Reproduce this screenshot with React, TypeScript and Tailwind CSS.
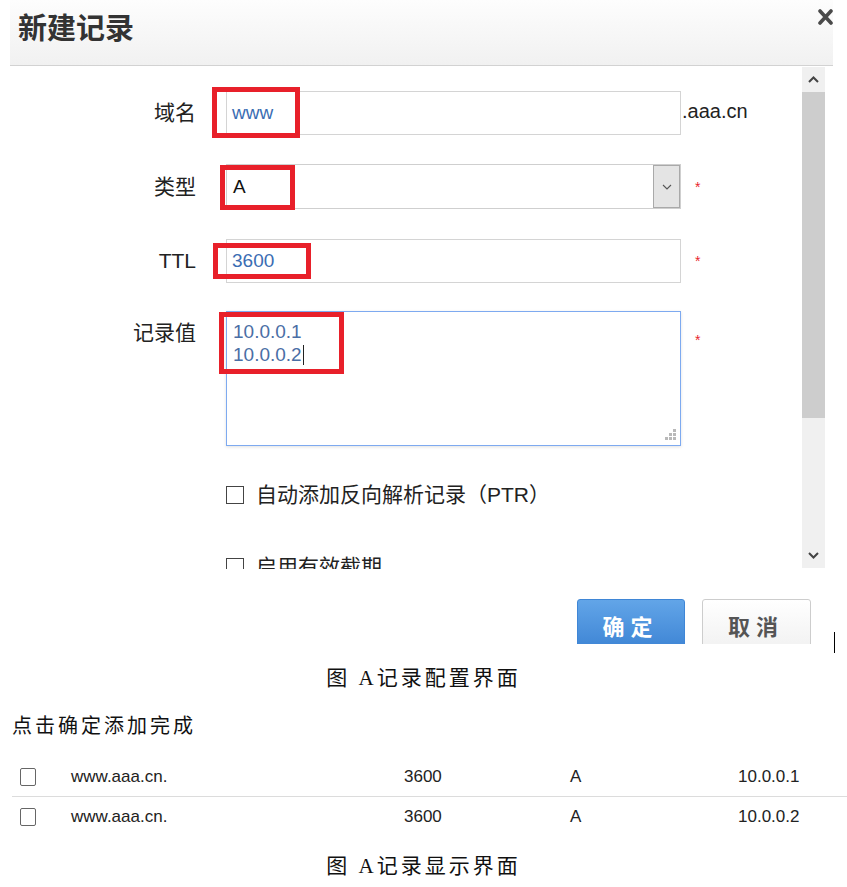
import type { ReactNode } from "react";

const sans = "font-['Liberation_Sans','Noto_Sans_CJK_SC',sans-serif]";
const serif = "font-['Liberation_Serif','Noto_Sans_CJK_SC',serif]";

function RedMark({ className }: { className: string }) {
  return <div className={`pointer-events-none absolute border-[5px] border-[#e8202a] ${className}`} />;
}

function Star({ className = "" }: { className?: string }) {
  return <span className={`-ml-[16px] text-[14px] leading-none text-[#e8262d] ${className}`}>*</span>;
}

function Row({ label, children, top, labelTop = false }: { label: string; children: ReactNode; top: string; labelTop?: boolean }) {
  return (
    <div className={`grid grid-cols-[186px_455px_1fr] gap-x-[30px] ${labelTop ? "items-start" : "items-center"} ${top}`}>
      <div className={`text-right text-[21px] leading-[28px] text-[#222] ${labelTop ? "pt-[8px]" : ""}`}>{label}</div>
      {children}
    </div>
  );
}

function Chevron({ up }: { up?: boolean }) {
  return (
    <svg width="11" height="7" viewBox="0 0 11 7" className="text-[#444]">
      <path d={up ? "M1 6 L5.5 1.5 L10 6" : "M1 1 L5.5 5.5 L10 1"} fill="none" stroke="currentColor" strokeWidth="2" />
    </svg>
  );
}

function Box({ small }: { small?: boolean }) {
  return small ? (
    <span className="inline-block h-[18px] w-[16px] rounded-[2px] border border-[#666] bg-white" />
  ) : (
    <span className="inline-block h-[18px] w-[18px] border-[1.5px] border-[#444] bg-white" />
  );
}

export default function App() {
  const records = ["10.0.0.1", "10.0.0.2"];
  return (
    <div className={`min-h-[887px] w-[847px] bg-white ${sans}`}>
      {/* dialog header */}
      <div className="ml-[10px] flex h-[66px] w-[823px] items-start justify-between border-b border-[#d2d2d2] bg-gradient-to-b from-[#fdfdfd] to-[#f1f1f1] pl-[8px]">
        <h1 className="pt-[6px] font-['Noto_Sans_CJK_SC',sans-serif] text-[29px] font-bold leading-[40px] text-[#333]">新建记录</h1>
        <svg width="15" height="16" viewBox="0 0 15 16" className="mt-[9px]">
          <path d="M2 2 L13 14 M13 2 L2 14" stroke="#4a4a4a" strokeWidth="3.6" strokeLinecap="round" />
        </svg>
      </div>

      {/* dialog body */}
      <div className="ml-[10px] flex h-[503px] w-[823px]">
        <div className="h-full flex-1 overflow-hidden pt-[25px]">
          <Row label="域名" top="">
            <div className="relative h-[44px] border border-[#d4d4d4] bg-white pl-[5px] text-[19px] leading-[42px] text-[#3b6db3]">
              www
              <RedMark className="left-[-15px] top-[-5px] h-[51px] w-[88px]" />
            </div>
            <span className="-ml-[29px] -mt-[5px] text-[20px] text-[#222]">.aaa.cn</span>
          </Row>

          <Row label="类型" top="mt-[29px]">
            <div className="relative flex h-[45px] border border-[#cfcfcf] bg-white">
              <div className="flex-1 pl-[6px] text-[19px] leading-[43px] text-[#111]">A</div>
              <div className="flex w-[27px] items-center justify-center border border-[#a9a9a9] bg-[#e4e4e4]">
                <svg width="10" height="6" viewBox="0 0 10 6">
                  <path d="M1 1 L5 5 L9 1" fill="none" stroke="#555" strokeWidth="1.1" />
                </svg>
              </div>
              <RedMark className="left-[-7px] top-0 h-[45px] w-[75px]" />
            </div>
            <Star />
          </Row>

          <Row label="TTL" top="mt-[30px]">
            <div className="relative h-[44px] border border-[#d4d4d4] bg-white pl-[5px] text-[19px] leading-[42px] text-[#3b6db3]">
              3600
              <RedMark className="left-[-14px] top-[3px] h-[36px] w-[98px]" />
            </div>
            <Star />
          </Row>

          <Row label="记录值" top="mt-[28px]" labelTop>
            <div className="relative h-[135px] border border-[#7eaaf0] bg-white pl-[6px] pt-[8px] text-[19px] leading-[23px] text-[#4a6ea5] shadow-[0_1px_3px_rgba(0,0,0,0.12)]">
              {records.map((r, i) => (
                <div key={r} className="flex items-center">
                  {r}
                  {i === records.length - 1 && <span className="ml-[1px] inline-block h-[20px] w-px bg-[#222]" />}
                </div>
              ))}
              <svg width="13" height="13" viewBox="0 0 13 13" className="absolute bottom-[3px] right-[3px]">
                <g fill="#b9b9b9">
                  <rect x="9" y="0" width="3" height="3" />
                  <rect x="5" y="4" width="3" height="3" />
                  <rect x="9" y="4" width="3" height="3" />
                  <rect x="1" y="8" width="3" height="3" />
                  <rect x="5" y="8" width="3" height="3" />
                  <rect x="9" y="8" width="3" height="3" />
                </g>
              </svg>
              <RedMark className="left-[-8px] top-0 h-[62px] w-[125px]" />
            </div>
            <Star className="mt-[22px]" />
          </Row>

          <div className="ml-[216px] mt-[35px] flex h-[28px] items-center gap-[12px] text-[21px] text-[#222]">
            <Box />
            <span>自动添加反向解析记录（PTR）</span>
          </div>
          <div className="ml-[216px] mt-[44px] flex h-[28px] items-center gap-[12px] text-[21px] text-[#222]">
            <Box />
            <span>启用有效截期</span>
          </div>
        </div>

        {/* scrollbar */}
        <div className="mr-[8px] mt-[1px] flex h-[501px] w-[23px] flex-col bg-[#f0f0f0]">
          <div className="flex h-[25px] items-center justify-center">
            <Chevron up />
          </div>
          <div className="h-[326px] bg-[#cdcdcd]" />
          <div className="flex flex-1 items-end justify-center pb-[9px]">
            <Chevron />
          </div>
        </div>
      </div>

      {/* dialog footer */}
      <div className="flex justify-end pr-[12px] pt-[30px]">
        <div className="flex h-[45px] items-start gap-[17px] overflow-hidden">
          <button className="h-[52px] w-[108px] rounded-[3px] border border-[#3f86d6] bg-gradient-to-b from-[#62a5e8] to-[#3d84d4] font-['Noto_Sans_CJK_SC',sans-serif] text-[22px] font-bold tracking-[6px] text-white">
            确定
          </button>
          <button className="h-[52px] w-[109px] rounded-[3px] border border-[#cdcdcd] bg-gradient-to-b from-[#ffffff] to-[#f1f1f1] font-['Noto_Sans_CJK_SC',sans-serif] text-[22px] font-bold tracking-[6px] text-[#555]">
            取消
          </button>
        </div>
        <div className="ml-[23px] mt-[33px] h-[21px] w-[1.5px] bg-black" />
      </div>

      {/* captions and result table */}
      <p className={`mt-[11px] text-center text-[21px] leading-[28px] tracking-[3px] text-[#111] ${serif}`}>图 A记录配置界面</p>
      <p className={`ml-[12px] mt-[20px] text-[20px] leading-[28px] tracking-[3px] text-[#111] ${serif}`}>点击确定添加完成</p>

      <div className="ml-[12px] mt-[17px] text-[17px] text-[#222]">
        {records.map((ip, i) => (
          <div
            key={ip}
            className={`grid h-[40px] grid-cols-[59px_333px_166px_168px_1fr] items-center ${i === 0 ? "border-b border-[#dcdcdc]" : ""}`}
          >
            <div className="flex pl-[8px]">
              <Box small />
            </div>
            <span>www.aaa.cn.</span>
            <span>3600</span>
            <span>A</span>
            <span>{ip}</span>
          </div>
        ))}
      </div>

      <p className={`mt-[15px] text-center text-[21px] leading-[28px] tracking-[3px] text-[#111] ${serif}`}>图 A记录显示界面</p>
    </div>
  );
}
